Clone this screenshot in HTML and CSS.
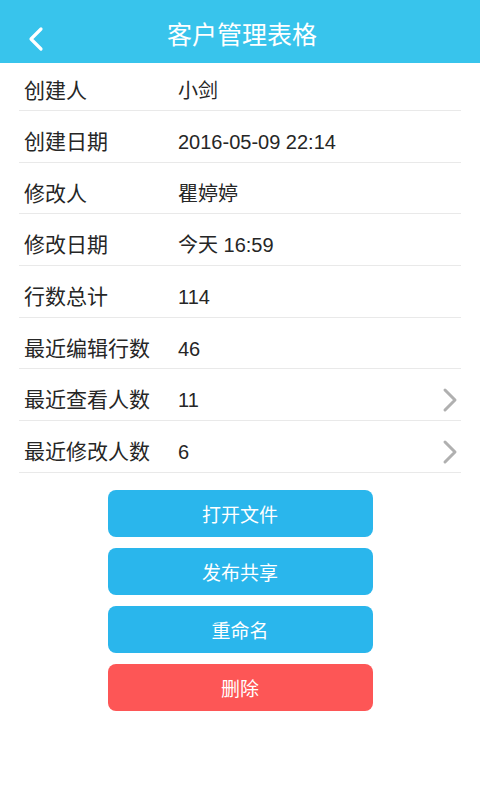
FILE: index.html
```html
<!DOCTYPE html>
<html lang="zh-CN">

<head>
    <meta charset="UTF-8">
    <meta name="viewport" content="width=device-width, initial-scale=1.0">
    <title>客户管理表格</title>
    <link rel="stylesheet" href="styles.css">
</head>

<body>
    <div class="header">
        <span class="back">
            <svg width="20" height="26" viewBox="0 0 20 26">
                <polyline points="15,3 5,13 15,23" fill="none" stroke="#fff" stroke-width="3.2" stroke-linecap="round" stroke-linejoin="round" />
            </svg>
        </span>
        <h1>客户管理表格</h1>
    </div>

    <div class="info-list">
        <div class="row first">
            <span class="label">创建人</span>
            <span class="value">小剑</span>
        </div>
        <div class="row">
            <span class="label">创建日期</span>
            <span class="value">2016-05-09 22:14</span>
        </div>
        <div class="row">
            <span class="label">修改人</span>
            <span class="value">瞿婷婷</span>
        </div>
        <div class="row">
            <span class="label">修改日期</span>
            <span class="value">今天 16:59</span>
        </div>
        <div class="row">
            <span class="label">行数总计</span>
            <span class="value">114</span>
        </div>
        <div class="row">
            <span class="label">最近编辑行数</span>
            <span class="value">46</span>
        </div>
        <div class="row">
            <span class="label">最近查看人数</span>
            <span class="value">11</span>
            <span class="arrow">
                <svg width="18" height="26" viewBox="0 0 18 26">
                    <polyline points="4,3 14,13 4,23" fill="none" stroke="#b0b0b0" stroke-width="3" stroke-linecap="round" stroke-linejoin="round" />
                </svg>
            </span>
        </div>
        <div class="row">
            <span class="label">最近修改人数</span>
            <span class="value">6</span>
            <span class="arrow">
                <svg width="18" height="26" viewBox="0 0 18 26">
                    <polyline points="4,3 14,13 4,23" fill="none" stroke="#b0b0b0" stroke-width="3" stroke-linecap="round" stroke-linejoin="round" />
                </svg>
            </span>
        </div>
    </div>

    <div class="actions">
        <button class="btn">打开文件</button>
        <button class="btn">发布共享</button>
        <button class="btn">重命名</button>
        <button class="btn danger">删除</button>
    </div>
</body>

</html>
```

FILE: styles.css
```css
body {
    margin: 0;
    background-color: #ffffff;
    font-family: "Liberation Sans", Arial, "Noto Sans CJK SC", sans-serif;
    color: #222222;
}

.header {
    height: 63px;
    background-color: #38c4ec;
    display: flex;
    align-items: center;
    justify-content: center;
    position: relative;
}

.header h1 {
    margin: 0;
    font-size: 25px;
    font-weight: normal;
    color: #ffffff;
    padding-top: 2px;
    padding-left: 4px;
}

.back {
    position: absolute;
    left: 26px;
    top: 26px;
    display: flex;
}

.info-list {
    margin: 0 19px 0 19px;
}

.row {
    display: flex;
    align-items: center;
    padding-top: 11px;
    box-sizing: border-box;
    height: 51.7px;
    border-bottom: 1px solid #e9e9e9;
    font-size: 21px;
    line-height: 24px;
}

.row.first {
    height: 48px;
    padding-top: 9px;
}

.label {
    width: 154px;
    padding-left: 5px;
    color: #262626;
}

.value {
    flex: 1;
    font-size: 20px;
    color: #262626;
}

.arrow {
    display: flex;
    margin-right: 2px;
}

.actions {
    display: flex;
    flex-direction: column;
    align-items: center;
    gap: 11px;
    padding-top: 17px;
}

.btn {
    width: 265px;
    height: 47px;
    border: none;
    border-radius: 8px;
    background-color: #2ab6ec;
    color: #ffffff;
    font-family: "Liberation Sans", Arial, "Noto Sans CJK SC", sans-serif;
    font-size: 19px;
    cursor: pointer;
}

.btn.danger {
    background-color: #fd5656;
}
```
